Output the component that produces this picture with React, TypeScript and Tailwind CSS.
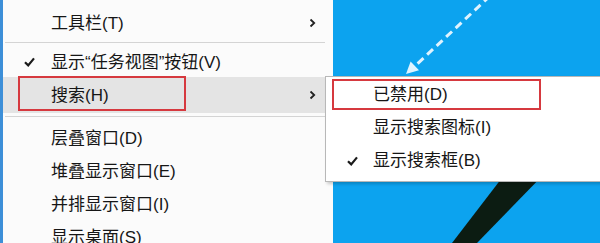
import React from "react";

function Check({ className }: { className: string }) {
  return (
    <svg
      className={className}
      width="11"
      height="10"
      viewBox="0 0 11 10"
      fill="none">
      <path
        d="M1 5.2 L4.2 8.4 L10 1.4"
        stroke="#1a1a1a"
        strokeWidth="2.2"
      />
    </svg>
  );
}

function Chevron() {
  return (
    <svg
      className="absolute left-[306px] top-1/2 -translate-y-1/2"
      width="7"
      height="9"
      viewBox="0 0 7 9"
      fill="none">
      <path
        d="M1.5 1 L5.2 4.5 L1.5 8"
        stroke="#222"
        strokeWidth="1.8"
      />
    </svg>
  );
}

function Separator({ className }: { className: string }) {
  return (
    <div className={`ml-[2px] mr-[8px] h-px shrink-0 bg-[#d4d4d4] ${className}`} />
  );
}

interface ItemProps {
  label: string;
  height: string;
  checked?: boolean;
  submenu?: boolean;
}

function MenuItem({ label, height, checked, submenu }: ItemProps) {
  return (
    <div className={`relative flex shrink-0 items-center pl-[48px] pt-[3px] ${height}`}>
      {checked && (
        <Check className="absolute left-[21px] top-1/2 -translate-y-1/2" />
      )}
      <span>{label}</span>
      {submenu && <Chevron />}
    </div>
  );
}

export default function App() {
  return (
    <div className="relative flex h-[243px] w-[600px] overflow-hidden bg-white font-['Liberation_Sans','Noto_Sans_CJK_SC',sans-serif] text-[17px] text-[#161616]">
      <div className="w-[3px] bg-[#3d8fd8]" />

      <div className="flex w-[330px] flex-col bg-[#fbfbfb] pt-[5px]">
        <MenuItem label="工具栏(T)" height="h-[35px]" submenu />
        <Separator className="mt-[2px] mb-[3px]" />
        <MenuItem label="显示“任务视图”按钮(V)" height="h-[31px]" checked />
        <div className="relative flex h-[36px] shrink-0 items-center bg-[#e4e4e4] pl-[48px] pt-[2px]">
          <span>搜索(H)</span>
          <Chevron />
          <div className="absolute left-[15px] top-[-1px] h-[35px] w-[168px] border-2 border-[#d6393f]" />
        </div>
        <Separator className="mt-[3px] mb-[4px]" />
        <MenuItem label="层叠窗口(D)" height="h-[33px]" />
        <MenuItem label="堆叠显示窗口(E)" height="h-[33px]" />
        <MenuItem label="并排显示窗口(I)" height="h-[33px]" />
        <MenuItem label="显示桌面(S)" height="h-[33px]" />
      </div>

      <div className="relative flex-1 bg-[#0ca3ef]">
        <svg
          className="absolute inset-0"
          width="267"
          height="243"
          viewBox="333 0 267 243">
          <line
            x1="490"
            y1="-4"
            x2="415"
            y2="66"
            stroke="#dff3ff"
            strokeWidth="3"
            strokeDasharray="8 5"
          />
          <polygon
            points="406,74 419,70.2 410.6,61.4"
            fill="#dff3ff"
          />
          <polygon
            points="508,170 548,170 477,243 452,243"
            fill="#0c1c12"
          />
        </svg>
      </div>

      <div className="absolute left-[325px] top-[76px] w-[290px] border border-[#b8b8b8] bg-white pt-[2px] pb-[4px] shadow-[2px_2px_3px_rgba(0,0,0,0.2)]">
        <div className="relative flex h-[32px] items-center pl-[47px]">
          <span>已禁用(D)</span>
          <div className="absolute left-[6px] top-0 h-[31px] w-[209px] border-2 border-[#d6393f]" />
        </div>
        <div className="flex h-[33px] items-center pl-[47px]">
          <span>显示搜索图标(I)</span>
        </div>
        <div className="relative flex h-[33px] items-center pl-[47px]">
          <Check className="absolute left-[21px] top-1/2 -translate-y-1/2" />
          <span>显示搜索框(B)</span>
        </div>
      </div>
    </div>
  );
}
